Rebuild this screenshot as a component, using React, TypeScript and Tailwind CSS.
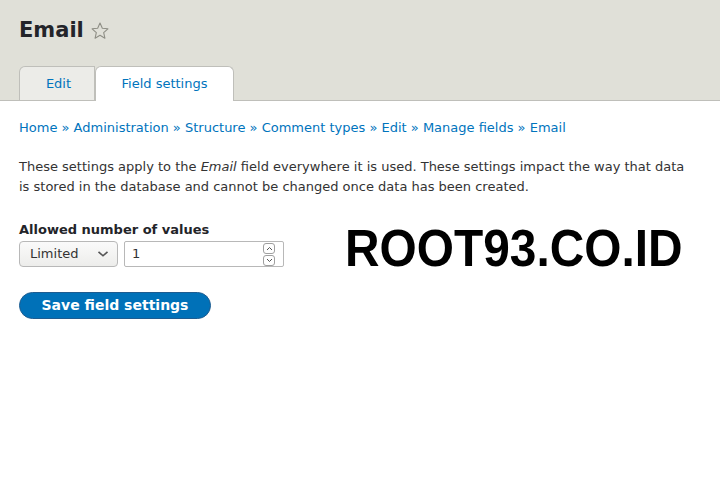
import React from "react";

export default function App() {
  return (
    <div className="relative w-[720px] h-[496px] bg-white text-[#333] overflow-hidden" style={{ fontFamily: '"DejaVu Sans", sans-serif' }}>
      {/* HEADER */}
      <div className="bg-[#e0e0d8] border-b border-[#bfbfba] h-[101px] px-[19px] flex flex-col">
        <h1 className="mt-[15px] flex items-center gap-[6px] text-[21px] font-bold text-[#232429] leading-[30px]">
          Email
          <svg width="20" height="20" viewBox="0 0 24 24" className="mt-[1px]">
            <path d="M12 2.5l2.8 6.3 6.7.6-5.1 4.5 1.5 6.7L12 17.1l-5.9 3.5 1.5-6.7-5.1-4.5 6.7-.6z" fill="none" stroke="#8e8e85" strokeWidth="1.3" strokeLinejoin="round" />
          </svg>
        </h1>
        <div className="mt-auto flex items-end">
          <div className="w-[76px] h-[34px] bg-[#ecece8] border border-b-0 border-[#bfbfba] rounded-tl-[6px] flex items-center justify-center pl-[3px] text-[13px] text-[#0074bd]">
            Edit
          </div>
          <div className="w-[139px] h-[35px] -mb-px bg-white border border-b-0 border-[#bfbfba] rounded-t-[6px] flex items-center justify-center text-[13px] text-[#0074bd]">
            Field settings
          </div>
        </div>
      </div>

      {/* CONTENT */}
      <div className="px-[19px]">
        <div className="mt-[18px] text-[13px] text-[#0074bd] leading-[18px]">
          Home » Administration » Structure » Comment types » Edit » Manage fields » Email
        </div>
        <p className="mt-[20px] max-w-[670px] text-[13px] leading-[20px] text-[#333]">
          These settings apply to the <em>Email</em> field everywhere it is used. These settings impact the way that data is stored in the database and cannot be changed once data has been created.
        </p>
        <div className="mt-[25px] text-[13px] font-bold text-[#232429] leading-[16px]">Allowed number of values</div>
        <div className="mt-[3px] flex gap-[6px]">
          <div className="w-[99px] h-[26px] border border-[#b8b8b8] rounded-[4px] bg-gradient-to-b from-[#fafafa] to-[#ededeb] flex items-center justify-between pl-[10px] pr-[8px] text-[13px] text-[#333]">
            Limited
            <svg width="12" height="8" viewBox="0 0 12 8">
              <path d="M1.5 1.8l4.5 4 4.5-4" fill="none" stroke="#555" strokeWidth="1.6" />
            </svg>
          </div>
          <div className="w-[160px] h-[26px] border border-[#b8b8b8] rounded-[2px] bg-white flex items-center justify-between pl-[7px] pr-[8px] text-[13px] text-[#333]">
            1
            <div className="flex flex-col gap-[1px]">
              <div className="w-[12px] h-[11px] border border-[#a0a0a0] rounded-[3px] flex items-center justify-center">
                <svg width="7" height="5" viewBox="0 0 7 5"><path d="M1 4l2.5-2.5L6 4" fill="none" stroke="#555" strokeWidth="1" /></svg>
              </div>
              <div className="w-[12px] h-[11px] border border-[#a0a0a0] rounded-[3px] flex items-center justify-center">
                <svg width="7" height="5" viewBox="0 0 7 5"><path d="M1 1l2.5 2.5L6 1" fill="none" stroke="#555" strokeWidth="1" /></svg>
              </div>
            </div>
          </div>
        </div>
        <button className="mt-[25px] w-[192px] h-[27px] rounded-full bg-[#0071b8] border border-[#1e5c90] text-white text-[14px] font-bold">
          Save field settings
        </button>
      </div>

      {/* WATERMARK */}
      <div className="absolute left-[345px] top-[216px] text-[52px] font-bold text-black leading-[64px] origin-left scale-x-[0.92]" style={{ fontFamily: '"Liberation Sans", Arial, sans-serif' }}>
        ROOT93.CO.ID
      </div>
    </div>
  );
}
